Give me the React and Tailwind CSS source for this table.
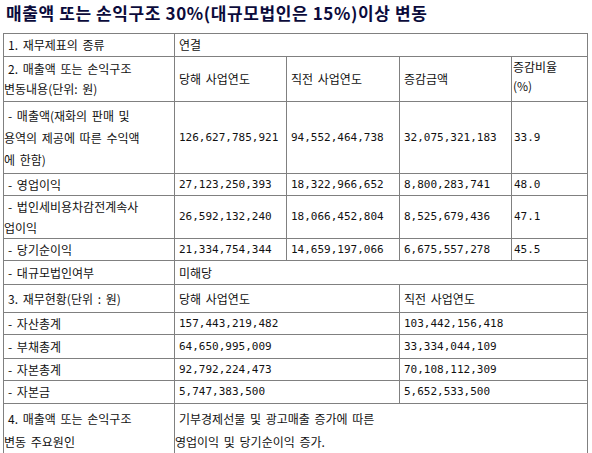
import React from "react";

const cell = "border border-[#808080] p-0 align-middle leading-[20px] indent-[4px] [word-spacing:2px]";
const num = "border border-[#808080] p-0 align-middle leading-[20px] indent-[4px] font-['DejaVu_Sans_Mono',monospace] text-[11px]";

const changeRows = [
  { label: "- 영업이익", h: "h-[22px]", cur: "27,123,250,393", prev: "18,322,966,652", diff: "8,800,283,741", rate: "48.0" },
  { label: ["- 법인세비용차감전계속사", "업이익"], h: "h-[43px]", cur: "26,592,132,240", prev: "18,066,452,804", diff: "8,525,679,436", rate: "47.1" },
  { label: "- 당기순이익", h: "h-[22px]", cur: "21,334,754,344", prev: "14,659,197,066", diff: "6,675,557,278", rate: "45.5" },
];

const statusRows = [
  { label: "- 자산총계", h: "h-[22px]", cur: "157,443,219,482", prev: "103,442,156,418" },
  { label: "- 부채총계", h: "h-[24px]", cur: "64,650,995,009", prev: "33,334,044,109" },
  { label: "- 자본총계", h: "h-[22px]", cur: "92,792,224,473", prev: "70,108,112,309" },
  { label: "- 자본금", h: "h-[23px]", cur: "5,747,383,500", prev: "5,652,533,500" },
];

const Label = ({ text }) => {
  if (!Array.isArray(text)) return text;
  return text.map((t, i) => (
    <React.Fragment key={i}>
      {i > 0 && <br />}
      {t}
    </React.Fragment>
  ));
};

export default function App() {
  return (
    <div className="w-[592px] h-[453px] overflow-hidden bg-white text-[#111] font-['Noto_Sans_CJK_KR',sans-serif] text-[12px]">
      <div className="pl-[6px] h-[25px] leading-[25px] text-[17px] font-bold tracking-[0.6px] text-[#0b0b3b]">
        매출액 또는 손익구조 30%(대규모법인은 15%)이상 변동
      </div>
      <table className="mt-[8px] ml-[3px] w-[584px] table-fixed border-collapse">
        <colgroup>
          <col className="w-[171px]" />
          <col className="w-[112px]" />
          <col className="w-[113px]" />
          <col className="w-[112px]" />
          <col className="w-[76px]" />
        </colgroup>
        <tbody>
          <tr className="h-[23px]">
            <td className={cell}>1. 재무제표의 종류</td>
            <td className={cell} colSpan={4}>연결</td>
          </tr>
          <tr className="h-[44px]">
            <td className={cell}>2. 매출액 또는 손익구조<br />변동내용(단위: 원)</td>
            <td className={cell}>당해 사업연도</td>
            <td className={cell}>직전 사업연도</td>
            <td className={cell}>증감금액</td>
            <td className={`${cell} !indent-0 !leading-[19px] pl-px pb-[6px]`}>증감비율<br />(%)</td>
          </tr>
          <tr className="h-[72px]">
            <td className={`${cell} !leading-[22px]`}>- 매출액(재화의 판매 및<br />용역의 제공에 따른 수익액<br />에 한함)</td>
            <td className={num}>126,627,785,921</td>
            <td className={num}>94,552,464,738</td>
            <td className={num}>32,075,321,183</td>
            <td className={`${num} !indent-[2px]`}>33.9</td>
          </tr>
          {changeRows.map((r, i) => (
            <tr key={i} className={r.h}>
              <td className={`${cell} !leading-[21px]`}><Label text={r.label} /></td>
              <td className={num}>{r.cur}</td>
              <td className={num}>{r.prev}</td>
              <td className={num}>{r.diff}</td>
              <td className={`${num} !indent-[2px]`}>{r.rate}</td>
            </tr>
          ))}
          <tr className="h-[24px]">
            <td className={cell}>- 대규모법인여부</td>
            <td className={cell} colSpan={4}>미해당</td>
          </tr>
          <tr className="h-[28px]">
            <td className={cell}>3. 재무현황(단위 : 원)</td>
            <td className={cell} colSpan={2}>당해 사업연도</td>
            <td className={cell} colSpan={2}>직전 사업연도</td>
          </tr>
          {statusRows.map((r, i) => (
            <tr key={i} className={r.h}>
              <td className={cell}>{r.label}</td>
              <td className={num} colSpan={2}>{r.cur}</td>
              <td className={num} colSpan={2}>{r.prev}</td>
            </tr>
          ))}
          <tr className="h-[52px]">
            <td className={`${cell} !leading-[23px]`}>4. 매출액 또는 손익구조<br />변동 주요원인</td>
            <td className={`${cell} !leading-[23px]`} colSpan={4}>기부경제선물 및 광고매출 증가에 따른<br />영업이익 및 당기순이익 증가.</td>
          </tr>
        </tbody>
      </table>
    </div>
  );
}
